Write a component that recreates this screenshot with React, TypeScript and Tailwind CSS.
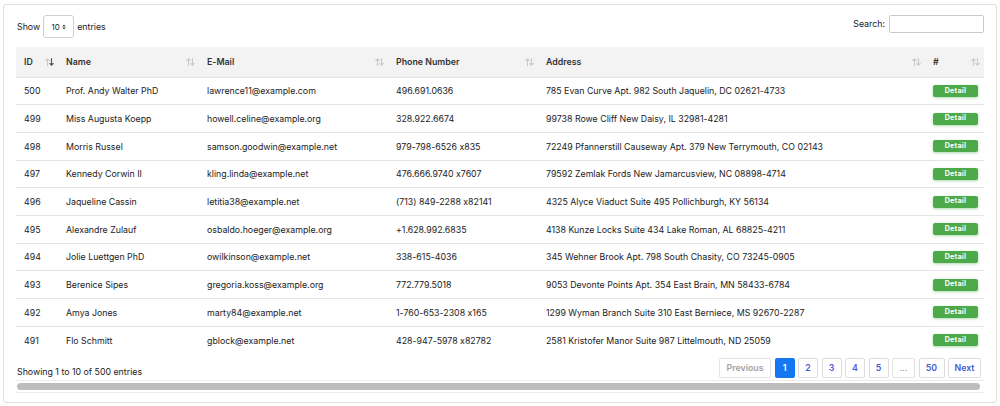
import React from "react";

type Row = {
  id: number;
  name: string;
  email: string;
  phone: string;
  address: string;
};

const rows: Row[] = [
  { id: 500, name: "Prof. Andy Walter PhD", email: "lawrence11@example.com", phone: "496.691.0636", address: "785 Evan Curve Apt. 982 South Jaquelin, DC 02621-4733" },
  { id: 499, name: "Miss Augusta Koepp", email: "howell.celine@example.org", phone: "328.922.6674", address: "99738 Rowe Cliff New Daisy, IL 32981-4281" },
  { id: 498, name: "Morris Russel", email: "samson.goodwin@example.net", phone: "979-798-6526 x835", address: "72249 Pfannerstill Causeway Apt. 379 New Terrymouth, CO 02143" },
  { id: 497, name: "Kennedy Corwin II", email: "kling.linda@example.net", phone: "476.666.9740 x7607", address: "79592 Zemlak Fords New Jamarcusview, NC 08898-4714" },
  { id: 496, name: "Jaqueline Cassin", email: "letitia38@example.net", phone: "(713) 849-2288 x82141", address: "4325 Alyce Viaduct Suite 495 Pollichburgh, KY 56134" },
  { id: 495, name: "Alexandre Zulauf", email: "osbaldo.hoeger@example.org", phone: "+1.628.992.6835", address: "4138 Kunze Locks Suite 434 Lake Roman, AL 68825-4211" },
  { id: 494, name: "Jolie Luettgen PhD", email: "owilkinson@example.net", phone: "338-615-4036", address: "345 Wehner Brook Apt. 798 South Chasity, CO 73245-0905" },
  { id: 493, name: "Berenice Sipes", email: "gregoria.koss@example.org", phone: "772.779.5018", address: "9053 Devonte Points Apt. 354 East Brain, MN 58433-6784" },
  { id: 492, name: "Amya Jones", email: "marty84@example.net", phone: "1-760-653-2308 x165", address: "1299 Wyman Branch Suite 310 East Berniece, MS 92670-2287" },
  { id: 491, name: "Flo Schmitt", email: "gblock@example.net", phone: "428-947-5978 x82782", address: "2581 Kristofer Manor Suite 987 Littelmouth, ND 25059" },
];

function SortIcon({ active }: { active?: boolean }) {
  return (
    <svg width="9" height="8" viewBox="0 0 9 8" className="shrink-0">
      <g fill="none" strokeWidth="1.1" strokeLinecap="round" strokeLinejoin="round">
        <path d="M2.5 7.5V0.8M0.8 2.5L2.5 0.8L4.2 2.5" stroke="#c9c9c9" />
        <path d="M6.5 0.5V7.2M4.8 5.5L6.5 7.2L8.2 5.5" stroke={active ? "#555" : "#c9c9c9"} />
      </g>
    </svg>
  );
}

const headers = [
  { label: "ID", w: "w-[42px]", active: true },
  { label: "Name", w: "w-[141px]" },
  { label: "E-Mail", w: "w-[189px]" },
  { label: "Phone Number", w: "w-[150px]" },
  { label: "Address", w: "w-[387px]" },
  { label: "#", w: "w-[59px]" },
];

const pages = ["1", "2", "3", "4", "5", "…", "50"];

export default function App() {
  return (
    <div className="h-[406px] w-[1000px] bg-white pl-[3px] pt-[4px] text-[8.8px] text-[#222] [font-family:Inter,'Liberation_Sans',sans-serif] [font-feature-settings:'calt'_0]">
      <div className="h-[399px] w-[994px] rounded-[3px] border border-[#dedede] px-[12px] pt-[10px]">
        <div className="flex h-[23px] items-center justify-between">
          <div className="flex items-center pl-[1px]">
            <span>Show</span>
            <div className="mx-[3px] flex h-[23px] w-[31px] items-center justify-center gap-[2px] rounded-[3px] border border-[#cfcfcf] text-[8px]">
              <span>10</span>
              <svg width="4" height="6" viewBox="0 0 4 6">
                <path d="M0.3 2.4L2 0.6L3.7 2.4ZM0.3 3.6L2 5.4L3.7 3.6Z" fill="#444" />
              </svg>
            </div>
            <span>entries</span>
          </div>
          <div className="flex items-center gap-[4px] pb-[5px]">
            <span>Search:</span>
            <div className="h-[18px] w-[95px] rounded-[2px] border border-[#c9c9c9]" />
          </div>
        </div>

        <table className="mt-[9px] w-[968px] table-fixed border-collapse">
          <thead>
            <tr className="h-[30px] border-b border-[#e2e2e6] bg-[#f3f3f3]">
              {headers.map((h) => (
                <th key={h.label} className={`${h.w} p-0 text-left font-semibold text-[#333]`}>
                  <div className="flex items-center justify-between pl-[8px] pr-[4px]">
                    <span>{h.label}</span>
                    <SortIcon active={h.active} />
                  </div>
                </th>
              ))}
            </tr>
          </thead>
          <tbody>
            {rows.map((r) => (
              <tr key={r.id} className="h-[27.7px] border-b border-[#e4e4e8] last:border-b-0">
                <td className="pl-[8px]">{r.id}</td>
                <td className="pl-[8px]">{r.name}</td>
                <td className="pl-[8px]">{r.email}</td>
                <td className="pl-[8px]">{r.phone}</td>
                <td className="pl-[8px] whitespace-nowrap">{r.address}</td>
                <td className="pl-[8px]">
                  <button className="flex h-[12px] w-[45px] items-center justify-center rounded-[2px] bg-[#4caa4a] text-[7px] font-bold tracking-[0.3px] text-white shadow-[0_1px_3px_rgba(76,170,74,0.45)]">
                    Detail
                  </button>
                </td>
              </tr>
            ))}
          </tbody>
        </table>

        <div className="mt-[4px] flex items-end justify-between">
          <span className="pl-[1px]">Showing 1 to 10 of 500 entries</span>
          <div className="mr-[3px] flex gap-[3.5px] font-semibold">
            <span className="flex h-[20px] w-[52px] items-center justify-center rounded-[2px] border border-[#e4e4e4] text-[#a3a3a3]">
              Previous
            </span>
            {pages.map((p) => (
              <span
                key={p}
                className={
                  p === "1"
                    ? "flex h-[20px] w-[20px] items-center justify-center rounded-[2px] bg-[#1677f2] text-white"
                    : p === "…"
                    ? "flex h-[20px] w-[23px] items-center justify-center rounded-[2px] border border-[#e0e0e0] font-normal text-[#999]"
                    : p === "50"
                    ? "flex h-[20px] w-[26px] items-center justify-center rounded-[2px] border border-[#dcdcdc] text-[#4a5ad8]"
                    : "flex h-[20px] w-[20px] items-center justify-center rounded-[2px] border border-[#dcdcdc] text-[#4a5ad8]"
                }
              >
                {p}
              </span>
            ))}
            <span className="flex h-[20px] w-[33px] items-center justify-center rounded-[2px] border border-[#dcdcdc] text-[#4a5ad8]">
              Next
            </span>
          </div>
        </div>

        <div className="mt-[2px] border-y border-[#ececec] py-[2px]">
          <div className="ml-[1px] h-[7px] w-[963px] rounded-full bg-[#bdbdbd]" />
        </div>
      </div>
    </div>
  );
}
